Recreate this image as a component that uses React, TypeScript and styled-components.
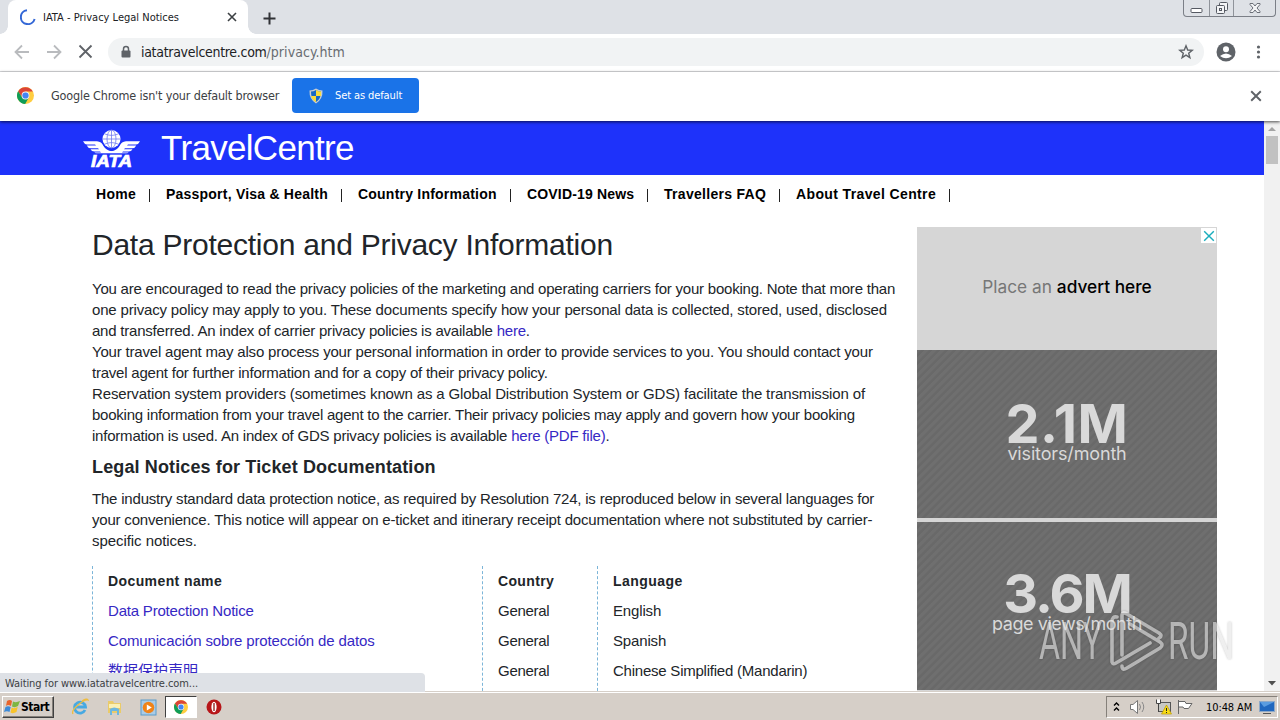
import styled, { createGlobalStyle } from "styled-components"

const GlobalStyle = createGlobalStyle`
  * { box-sizing: border-box; }
  body { margin: 0; background: #fff; overflow: hidden; }
`;

const Screen = styled.div`
  position: relative;
  width: 1280px;
  height: 720px;
  display: flex;
  flex-direction: column;
  overflow: hidden;
  background: #fff;
  font-family: "DejaVu Sans Condensed", "DejaVu Sans", sans-serif;
  color: #202124;
`;

const Text = styled.span<{ $size?: number; $ls?: number; $color?: string }>`
  font-size: ${p => p.$size || 11}px;
  letter-spacing: ${p => p.$ls || 0}px;
  color: ${p => p.$color || "inherit"};
  white-space: nowrap;
`;

/* browser frame */
const TabStrip = styled.div`
  height: 34px;
  flex: none;
  display: flex;
  background: #dee1e6;
  padding-left: 8px;
`;

const Tab = styled.div`
  position: relative;
  width: 240px;
  height: 34px;
  display: flex;
  align-items: center;
  padding: 0 11px 0 12px;
  background: #fff;
  border-radius: 8px 8px 0 0;
  &::before, &::after {
    content: "";
    position: absolute;
    bottom: 0;
    width: 8px;
    height: 8px;
  }
  &::before { left: -8px; background: radial-gradient(circle at 0 0, #dee1e6 7.5px, #fff 8px); }
  &::after { right: -8px; background: radial-gradient(circle at 100% 0, #dee1e6 7.5px, #fff 8px); }
`;

const TabTitle = styled.div`
  flex: 1;
  display: flex;
  padding-left: 7px;
`;

const NewTab = styled.div`
  padding: 10px 0 0 15px;
  flex: 1;
`;

const WindowButtons = styled.div`
  display: flex;
  width: 93px;
  height: 17px;
  margin-right: 4px;
  border: 1px solid #7b7f87;
  border-top: 0;
  border-radius: 0 0 4px 4px;
`;

const WindowButton = styled.div<{ $w: number }>`
  width: ${p => p.$w}px;
  display: flex;
  justify-content: center;
  & + & { border-left: 1px solid #8f939a; }
`;

const Toolbar = styled.div`
  height: 38px;
  flex: none;
  display: flex;
  align-items: center;
  padding: 0 14px 1px 14px;
  border-bottom: 1px solid #dcdde0;
`;

const NavIcons = styled.div`
  display: flex;
  gap: 16px;
  width: 94px;
  flex: none;
`;

const AddressBar = styled.div`
  width: 1096px;
  height: 28px;
  flex: none;
  display: flex;
  align-items: center;
  padding: 0 10px 0 12px;
  border-radius: 14px;
  background: #f1f3f4;
`;

const Url = styled.div`
  flex: 1;
  padding-left: 9px;
  white-space: nowrap;
  line-height: 20px;
`;

const ToolbarEnd = styled.div`
  display: flex;
  align-items: center;
  gap: 14px;
  padding-left: 11px;
`;

const InfoBar = styled.div`
  position: relative;
  z-index: 2;
  height: 49px;
  flex: none;
  display: flex;
  align-items: center;
  padding: 0 18px 2px 17px;
  background: #fff;
  box-shadow: 0 1px 3px rgba(0, 0, 0, .7);
`;

const InfoText = styled.div`
  width: 258px;
  flex: none;
  padding: 0 0 1px 17px;
  line-height: 17px;
  white-space: nowrap;
`;

const DefaultButton = styled.div`
  width: 127px;
  height: 35px;
  flex: none;
  display: flex;
  align-items: center;
  gap: 11px;
  padding-left: 16px;
  margin-right: auto;
  border-radius: 4px;
  background: #1a73e8;
  color: #fff;
`;

/* web page */
const Viewport = styled.div`
  height: 571px;
  flex: none;
  display: flex;
  overflow: hidden;
`;

const Page = styled.div`
  width: 1264px;
  font-family: "Liberation Sans", "Noto Sans CJK SC", sans-serif;
  color: #212529;
`;

const Banner = styled.header`
  height: 54px;
  display: flex;
  align-items: center;
  gap: 20px;
  padding-left: 83px;
  background: #1e32fa;
  color: #fff;
`;

const Menu = styled.nav`
  height: 38px;
  display: flex;
  align-items: center;
  padding-left: 96px;
  color: #000;
`;

const MenuItem = styled.div<{ $w: number; $ls?: number }>`
  width: ${p => p.$w}px;
  display: flex;
  justify-content: space-between;
  align-items: center;
  margin-right: 16px;
  font-size: 14px;
  font-weight: 700;
  letter-spacing: ${p => p.$ls || 0}px;
  white-space: nowrap;
  &::after {
    content: "";
    width: 1px;
    height: 13px;
    margin-top: 2px;
    background: #222;
  }
`;

const Columns = styled.div`
  display: flex;
  padding: 14px 0 0 92px;
`;

const Article = styled.main`
  width: 825px;
`;

const Title = styled.h1`
  margin: 0;
  height: 51px;
  font-size: 30px;
  line-height: 36px;
  font-weight: 400;
  letter-spacing: -.24px;
  white-space: nowrap;
`;

const Line = styled.div<{ $ls?: number }>`
  font-size: 15px;
  line-height: 21px;
  letter-spacing: ${p => p.$ls || 0}px;
  white-space: nowrap;
`;

const Link = styled.a`
  color: #3628c4;
`;

const Subtitle = styled.h2`
  margin: 0;
  padding-top: 10px;
  height: 42px;
  font-size: 18px;
  line-height: 22px;
  font-weight: 700;
  letter-spacing: .13px;
  white-space: nowrap;
`;

const Table = styled.div`
  display: grid;
  grid-template-columns: 390px 115px 300px;
  margin-top: 15px;
`;

const Column = styled.div`
  border-left: 1px dashed #7cb5d8;
  padding-left: 15px;
  font-size: 15px;
  line-height: 30px;
  height: 130px;
`;

const Cell = styled.div<{ $ls?: number; $head?: boolean }>`
  font-weight: ${p => p.$head ? 700 : 400};
  font-size: ${p => p.$head ? 14 : 15}px;
  letter-spacing: ${p => p.$ls || 0}px;
  height: 30px;
  white-space: nowrap;
`;

const Advert = styled.aside`
  position: relative;
  width: 300px;
  height: 600px;
  background: #d6d6d6;
  font-family: Inter, sans-serif;
`;

const AdvertClose = styled.div`
  position: absolute;
  right: 1px;
  top: 1px;
  width: 15px;
  height: 15px;
  background: #fff;
  display: flex;
  align-items: center;
  justify-content: center;
`;

const AdvertHead = styled.div`
  height: 123px;
  display: flex;
  align-items: center;
  justify-content: center;
  padding-bottom: 4px;
  font-size: 17.3px;
  color: #777;
  white-space: pre;
  b { font-weight: 500; color: #000; }
`;

const Stat = styled.div<{ $top: number }>`
  height: 168px;
  margin-bottom: 4px;
  padding-top: ${p => p.$top}px;
  display: flex;
  flex-direction: column;
  align-items: center;
  background: repeating-linear-gradient(135deg, #6f6f6f 0 2.4px, #696969 3.2px 5px, #6f6f6f 5.66px);
  color: #d9d9d9;
`;

const StatValue = styled.div<{ $ls?: number }>`
  font-size: 54px;
  line-height: 58px;
  height: 50px;
  font-weight: 700;
  letter-spacing: ${p => p.$ls || 0}px;
`;

const StatLabel = styled.div<{ $ls?: number }>`
  font-size: 18px;
  line-height: 18px;
  letter-spacing: ${p => p.$ls || 0}px;
`;

const Scrollbar = styled.div`
  width: 16px;
  display: flex;
  flex-direction: column;
  align-items: center;
  justify-content: space-between;
  background: #f1f1f1;
`;

const Thumb = styled.div`
  width: 12px;
  height: 28px;
  margin: -1px 0 auto;
  background: #c1c1c1;
`;

const StatusBubble = styled.div`
  position: absolute;
  left: 0;
  top: 673px;
  width: 425px;
  height: 19px;
  padding-left: 5px;
  line-height: 17px;
  background: #dee1e6;
  border-radius: 0 4px 0 0;
  color: #3c4043;
`;

const Watermark = styled.div`
  position: absolute;
  left: 1038px;
  top: 608px;
  width: 200px;
  height: 66px;
  opacity: .6;
  svg { display: block; filter: drop-shadow(0 0 1px rgba(0, 0, 0, .35)); }
`;

/* taskbar */
const Taskbar = styled.div`
  position: relative;
  height: 28px;
  flex: none;
  display: flex;
  align-items: center;
  padding: 1px 2px 0 2px;
  background: #d6cfc8;
  border-top: 1px solid #fff;
  box-shadow: 0 -1px 0 #d6cfc8;
  color: #000;
`;

const StartButton = styled.div`
  width: 52px;
  height: 22px;
  display: flex;
  align-items: center;
  padding-left: 1px;
  border: 1px solid;
  border-color: #fff #404040 #404040 #fff;
  box-shadow: inset -1px -1px 0 #85807a;
  font-weight: 700;
`;

const Launchers = styled.div`
  display: flex;
  flex: 1;
  align-items: center;
  padding-left: 9px;
`;

const Launcher = styled.div<{ $active?: boolean }>`
  width: ${p => p.$active ? 32 : 34}px;
  height: 22px;
  display: flex;
  align-items: center;
  justify-content: center;
  background: ${p => p.$active ? "#fff" : "transparent"};
  border: ${p => p.$active ? "1px solid #404040" : "0"};
  border-right-color: #fff;
  border-bottom-color: #fff;
`;

const Tray = styled.div`
  width: 172px;
  height: 22px;
  display: flex;
  align-items: center;
  padding-left: 5px;
  border: 1px solid;
  border-color: #85807a #fff #fff #85807a;
`;

const Clock = styled.div`
  width: 53px;
  margin-left: 11px;
  padding-bottom: 1px;
  line-height: 14px;
  white-space: nowrap;
`;

function Cross({ size, color, width }: { size: number, color: string, width: number }) {
    return (
        <svg width={size} height={size} viewBox="0 0 10 10">
            <path d="M1 1 9 9M9 1 1 9" stroke={color} strokeWidth={width} fill="none" />
        </svg>
    )
}

function ChromeLogo({ size }: { size: number }) {
    return (
        <svg width={size} height={size} viewBox="0 0 48 48">
            <circle cx="24" cy="24" r="24" fill="#ffcd40" />
            <path d="M24 13H44.8A24 24 0 0 0 3.2 12L14.5 29.5 24 24Z" fill="#db4437" />
            <path d="M3.2 12A24 24 0 0 0 23 48L33.5 29.5 24 24 14.5 29.5Z" fill="#0f9d58" />
            <circle cx="24" cy="24" r="11" fill="#f1f1f1" />
            <circle cx="24" cy="24" r="8.8" fill="#4285f4" />
        </svg>
    )
}

const wing = "M0 13.2H14Q18.5 13.5 20.5 18Q23 22.5 29 23.3V26H14Q12.5 26 11.5 24.6H18L17 23.6H11.5Q8.5 23.6 7.5 21.2H16L15 20.2H8Q5 20.2 3.7 17.4H13L12 16.4H4Q1.5 16.4 0 13.2Z";

function IataLogo() {
    return (
        <svg width="58" height="40" viewBox="0 0 58 40" fill="#fff">
            <path d={wing} />
            <path d={wing} transform="matrix(-1 0 0 1 57 0)" />
            <circle cx="28.5" cy="11" r="10.3" fill="#1e32fa" />
            <circle cx="28.5" cy="11" r="9" />
            <path d="M28.5 2V20M19.5 11H37.5M21.5 5.8Q28.5 9 35.5 5.8M21.5 16.2Q28.5 13 35.5 16.2" stroke="#6f7bf0" strokeWidth=".8" fill="none" />
            <ellipse cx="28.5" cy="11" rx="4.5" ry="9" stroke="#6f7bf0" strokeWidth=".8" fill="none" />
            <path d="M11 25.3H47L50 40H6Z" fill="#1e32fa" />
            <text x="8" y="38.5" fontFamily="Liberation Sans, sans-serif" fontSize="16" fontWeight="700" fontStyle="italic" stroke="#fff" strokeWidth=".7" textLength="41" lengthAdjust="spacingAndGlyphs">IATA</text>
        </svg>
    )
}

function Shield() {
    return (
        <svg width="16" height="16" viewBox="0 0 16 16">
            <path d="M8 .5Q11 2.5 14.5 2.5Q15 11 8 15.5Q1 11 1.5 2.5Q5 2.5 8 .5Z" fill="#c8cdd2" />
            <path d="M8 2Q10.5 3.5 13 3.6Q13.200 11 8 14Q2.800 11 3 3.6Q5.5 3.5 8 2Z" fill="#1769c6" />
            <path d="M8 2Q10.5 3.5 13 3.6V8H8ZM8 8H3Q4 12 8 14Z" fill="#f9dc3b" />
        </svg>
    )
}

export default function App() {
    return (
        <>
            <GlobalStyle />
            <Screen>
                <TabStrip>
                    <Tab>
                        <svg width="16" height="16" viewBox="0 0 16 16">
                            <path d="M7 1.2A7 7 0 1 0 14.6 10" fill="none" stroke="#3367d6" strokeWidth="2" />
                        </svg>
                        <TabTitle><Text $size={11}>IATA - Privacy Legal Notices</Text></TabTitle>
                        <Cross size={10} color="#3c4043" width={1.6} />
                    </Tab>
                    <NewTab>
                        <svg width="13" height="13" viewBox="0 0 13 13"><path d="M6.5 .5V12.5M.5 6.5H12.5" stroke="#303236" strokeWidth="2" /></svg>
                    </NewTab>
                    <WindowButtons>
                        <WindowButton $w={25}>
                            <svg width="13" height="16" viewBox="0 0 13 16"><rect x="1" y="8.5" width="11" height="4" rx="1" fill="#fff" stroke="#555962" /></svg>
                        </WindowButton>
                        <WindowButton $w={25}>
                            <svg width="14" height="16" viewBox="0 0 14 16" fill="#f3f4f6" stroke="#555962"><rect x="4.5" y="2.5" width="8" height="8" rx="1" /><rect x="1.5" y="5.5" width="8" height="8" rx="1" /><rect x="4.5" y="8.5" width="2" height="2" /></svg>
                        </WindowButton>
                        <WindowButton $w={42}>
                            <svg width="12" height="16" viewBox="0 0 12 16"><path d="M1 3.5H4L6 6 8 3.5H11V4.5L8 8 11 11.5V12.5H8L6 10 4 12.5H1V11.5L4 8 1 4.5Z" fill="#f3f4f6" stroke="#6b6f78" /></svg>
                        </WindowButton>
                    </WindowButtons>
                </TabStrip>
                <Toolbar>
                    <NavIcons>
                        <svg width="16" height="16" viewBox="0 0 16 16"><path d="M15 8H2M8 1.5 1.5 8 8 14.5" fill="none" stroke="#b9bbbe" strokeWidth="1.8" /></svg>
                        <svg width="16" height="16" viewBox="0 0 16 16"><path d="M1 8H14M8 1.5 14.5 8 8 14.5" fill="none" stroke="#b9bbbe" strokeWidth="1.8" /></svg>
                        <Cross size={15} color="#5f6368" width={1.2} />
                    </NavIcons>
                    <AddressBar>
                        <svg width="12" height="14" viewBox="0 0 12 14"><path d="M3.5 6V4A2.5 2.5 0 0 1 8.5 4V6" fill="none" stroke="#5f6368" strokeWidth="1.5" /><rect x="1.5" y="5.5" width="9" height="7" rx="1" fill="#5f6368" /></svg>
                        <Url><Text $size={14} $ls={-.3}>iatatravelcentre.com</Text><Text $size={14} $ls={.05} $color="#686c71">/privacy.htm</Text></Url>
                        <svg width="16" height="16" viewBox="0 0 16 16"><path d="M8 1.8 9.7 6 14.2 6.3 10.7 9.2 11.9 13.7 8 11.2 4.1 13.7 5.3 9.2 1.8 6.3 6.3 6Z" fill="none" stroke="#5f6368" strokeWidth="1.4" /></svg>
                    </AddressBar>
                    <ToolbarEnd>
                        <svg width="22" height="22" viewBox="0 0 22 22"><circle cx="11" cy="11" r="9.5" fill="#5f6368" /><circle cx="11" cy="8.3" r="3" fill="#fff" /><path d="M5 15Q11 10 17 15Q11 19.5 5 15Z" fill="#fff" /></svg>
                        <svg width="15" height="16" viewBox="0 0 15 16" fill="#5f6368"><circle cx="7.5" cy="3" r="1.6" /><circle cx="7.5" cy="8" r="1.6" /><circle cx="7.5" cy="13" r="1.6" /></svg>
                    </ToolbarEnd>
                </Toolbar>
                <InfoBar>
                    <ChromeLogo size={17} />
                    <InfoText><Text $size={12.5} $ls={-.17} $color="#3c4043">Google Chrome isn't your default browser</Text></InfoText>
                    <DefaultButton><Shield /><Text $size={11} $ls={-.1}>Set as default</Text></DefaultButton>
                    <Cross size={12} color="#5f6368" width={1.6} />
                </InfoBar>
                <Viewport>
                    <Page>
                        <Banner>
                            <IataLogo />
                            <Text $size={35} $ls={-.68}>TravelCentre</Text>
                        </Banner>
                        <Menu>
                            <MenuItem $w={54} $ls={.3}>Home</MenuItem>
                            <MenuItem $w={176} $ls={.22}>Passport, Visa &amp; Health</MenuItem>
                            <MenuItem $w={153} $ls={.22}>Country Information</MenuItem>
                            <MenuItem $w={121} $ls={.17}>COVID-19 News</MenuItem>
                            <MenuItem $w={116} $ls={.29}>Travellers FAQ</MenuItem>
                            <MenuItem $w={154} $ls={.37}>About Travel Centre</MenuItem>
                        </Menu>
                        <Columns>
                            <Article>
                                <Title>Data Protection and Privacy Information</Title>
                                <Line $ls={-.222}>You are encouraged to read the privacy policies of the marketing and operating carriers for your booking. Note that more than</Line>
                                <Line $ls={-.167}>one privacy policy may apply to you. These documents specify how your personal data is collected, stored, used, disclosed</Line>
                                <Line $ls={-.22}>and transferred. An index of carrier privacy policies is available <Link>here</Link>.</Line>
                                <Line $ls={-.193}>Your travel agent may also process your personal information in order to provide services to you. You should contact your</Line>
                                <Line $ls={-.22}>travel agent for further information and for a copy of their privacy policy.</Line>
                                <Line $ls={-.135}>Reservation system providers (sometimes known as a Global Distribution System or GDS) facilitate the transmission of</Line>
                                <Line $ls={-.23}>booking information from your travel agent to the carrier. Their privacy policies may apply and govern how your booking</Line>
                                <Line $ls={-.215}>information is used. An index of GDS privacy policies is available <Link>here (PDF file)</Link>.</Line>
                                <Subtitle>Legal Notices for Ticket Documentation</Subtitle>
                                <Line $ls={-.2}>The industry standard data protection notice, as required by Resolution 724, is reproduced below in several languages for</Line>
                                <Line $ls={-.195}>your convenience. This notice will appear on e-ticket and itinerary receipt documentation where not substituted by carrier-</Line>
                                <Line $ls={-.06}>specific notices.</Line>
                                <Table>
                                    <Column>
                                        <Cell $head $ls={.4}>Document name</Cell>
                                        <Cell $ls={-.2}><Link>Data Protection Notice</Link></Cell>
                                        <Cell $ls={-.14}><Link>Comunicación sobre protección de datos</Link></Cell>
                                        <Cell><Link>数据保护声明</Link></Cell>
                                    </Column>
                                    <Column>
                                        <Cell $head $ls={.35}>Country</Cell>
                                        <Cell $ls={-.28}>General</Cell>
                                        <Cell $ls={-.28}>General</Cell>
                                        <Cell $ls={-.28}>General</Cell>
                                    </Column>
                                    <Column>
                                        <Cell $head $ls={.45}>Language</Cell>
                                        <Cell $ls={-.15}>English</Cell>
                                        <Cell $ls={-.15}>Spanish</Cell>
                                        <Cell $ls={-.23}>Chinese Simplified (Mandarin)</Cell>
                                    </Column>
                                </Table>
                            </Article>
                            <Advert>
                                <AdvertHead>Place an <b>advert here</b></AdvertHead>
                                <Stat $top={45}>
                                    <StatValue $ls={.5}>2.1M</StatValue>
                                    <StatLabel $ls={-.15}>visitors/month</StatLabel>
                                </Stat>
                                <Stat $top={43}>
                                    <StatValue $ls={-2}>3.6M</StatValue>
                                    <StatLabel $ls={-.45}>page views/month</StatLabel>
                                </Stat>
                                <AdvertClose><Cross size={12} color="#1badbd" width={1.2} /></AdvertClose>
                            </Advert>
                        </Columns>
                    </Page>
                    <Scrollbar>
                        <svg width="16" height="16" viewBox="0 0 16 16"><path d="M4 10 8 6 12 10Z" fill="#a3a3a3" /></svg>
                        <Thumb />
                        <svg width="16" height="16" viewBox="0 0 16 16"><path d="M4 5 8 9.5 12 5Z" fill="#505050" /></svg>
                    </Scrollbar>
                </Viewport>
                <Taskbar>
                    <StartButton>
                        <svg width="17" height="16" viewBox="0 0 17 16"><path d="M3 2Q6 0 8 2L7 7Q4 5 2 7Z" fill="#e8642c" /><path d="M9 2.5Q12 4 16 2L14 7Q11 9 8 7.5Z" fill="#7db642" /><path d="M1.5 8Q4 6.5 6.7 8L5.5 13Q3 11.5 0 13Z" fill="#3c8ad8" /><path d="M7.7 8.5Q10 10 13.7 8L12.5 13Q9 15 6.5 13.5Z" fill="#f8c32a" /></svg>
                        <Text $size={12} $ls={-.5}>Start</Text>
                    </StartButton>
                    <Launchers>
                        <Launcher>
                            <svg width="18" height="18" viewBox="0 0 18 18" fill="none"><path d="M14 12A5.5 5.5 0 1 1 14.5 9H5" stroke="#47a9e2" strokeWidth="2.8" /><path d="M2 16Q0 13 7 7T17 2Q16 0 11 3" stroke="#efbd3f" strokeWidth="1.3" /></svg>
                        </Launcher>
                        <Launcher>
                            <svg width="17" height="17" viewBox="0 0 17 17"><path d="M2 2H7L8 4H15V14H2Z" fill="#eacb69" /><path d="M3 5H14V9H3Z" fill="#fbf0b4" /><path d="M4 16V10Q8 7 13 10V16H11V12H6V16Z" fill="#6db7df" /></svg>
                        </Launcher>
                        <Launcher>
                            <svg width="17" height="17" viewBox="0 0 17 17"><rect x="1" y="1" width="15" height="15" fill="#a9cbe6" stroke="#5a9cc9" /><circle cx="8.5" cy="8.5" r="5.8" fill="#f08318" /><path d="M6.8 5.5V11.5L11.8 8.5Z" fill="#fff" /></svg>
                        </Launcher>
                        <Launcher $active><ChromeLogo size={14} /></Launcher>
                        <Launcher>
                            <svg width="16" height="16" viewBox="0 0 16 16"><circle cx="8" cy="8" r="7.5" fill="#b71518" /><ellipse cx="8" cy="8" rx="2.6" ry="5.3" fill="#fff" /><path d="M8 4V12" stroke="#8f1113" strokeWidth="1.3" /></svg>
                        </Launcher>
                    </Launchers>
                    <Tray>
                        <svg width="9" height="12" viewBox="0 0 9 12"><path d="M2 4.5 4.5 2 7 4.5M2 9.5 4.5 7 7 9.5" fill="none" stroke="#000" strokeWidth="1.4" /></svg>
                        <svg width="34" height="18" viewBox="0 0 34 18"><path d="M9.5 6.5H12L16.5 2.5V15.5L12 11.5H9.5Z" fill="#fff" stroke="#777" /><path d="M18.5 6Q20.5 9 18.5 12M21 4Q24.5 9 21 14" fill="none" stroke="#888" /></svg>
                        <svg width="18" height="18" viewBox="0 0 18 18"><rect x="3.5" y="4.5" width="12" height="9" fill="#c8c8c4" stroke="#555" /><path d="M1.5 1.5V5.5H5.5V1.5M3.5 5V14" fill="#fff" stroke="#444" /><path d="M11.5 7 16.5 16H6.5Z" fill="#f8dc13" stroke="#bb9900" strokeWidth=".7" /><path d="M11.5 10V13M11.5 14V15" stroke="#222" /></svg>
                        <svg width="22" height="18" viewBox="0 0 22 18"><path d="M5.5 2V16M5.5 3.5H12L13 5.5H19L15.5 10.5H11L10 9H5.5" fill="#fff" stroke="#666" /></svg>
                        <Clock><Text $size={11} $ls={-.1}>10:48 AM</Text></Clock>
                        <svg width="16" height="16" viewBox="0 0 16 16"><rect x=".5" y="2.5" width="15" height="10" fill="#2168bf" stroke="#8fa9c7" /><path d="M1 3H15L5 8Z" fill="#5a9ce0" /><path d="M4 14.5H12" stroke="#555" /></svg>
                    </Tray>
                </Taskbar>
                <StatusBubble><Text $size={11} $ls={-.08}>Waiting for www.iatatravelcentre.com...</Text></StatusBubble>
                <Watermark>
                    <svg width="200" height="66" viewBox="0 0 200 66" fill="none">
                        <text x="1" y="51" fontFamily="Roboto, sans-serif" fontSize="51" fontWeight="400" fill="#e6e6e6" textLength="63" lengthAdjust="spacingAndGlyphs">ANY</text>
                        <text x="130" y="51" fontFamily="Roboto, sans-serif" fontSize="51" fontWeight="400" fill="#e6e6e6" textLength="66" lengthAdjust="spacingAndGlyphs">RUN</text>
                        <path d="M79 9Q74 8 74 14V54Q75 57 78 55L112 35M84 47V8Q84 3 89 6L121 25Q125 28 121 30M84 58Q84 63 89 60L122 40Q126 37 122 34L92 16" stroke="#e6e6e6" strokeWidth="3.6" strokeLinejoin="round" strokeLinecap="round" />
                    </svg>
                </Watermark>
            </Screen>
        </>
    )
}
